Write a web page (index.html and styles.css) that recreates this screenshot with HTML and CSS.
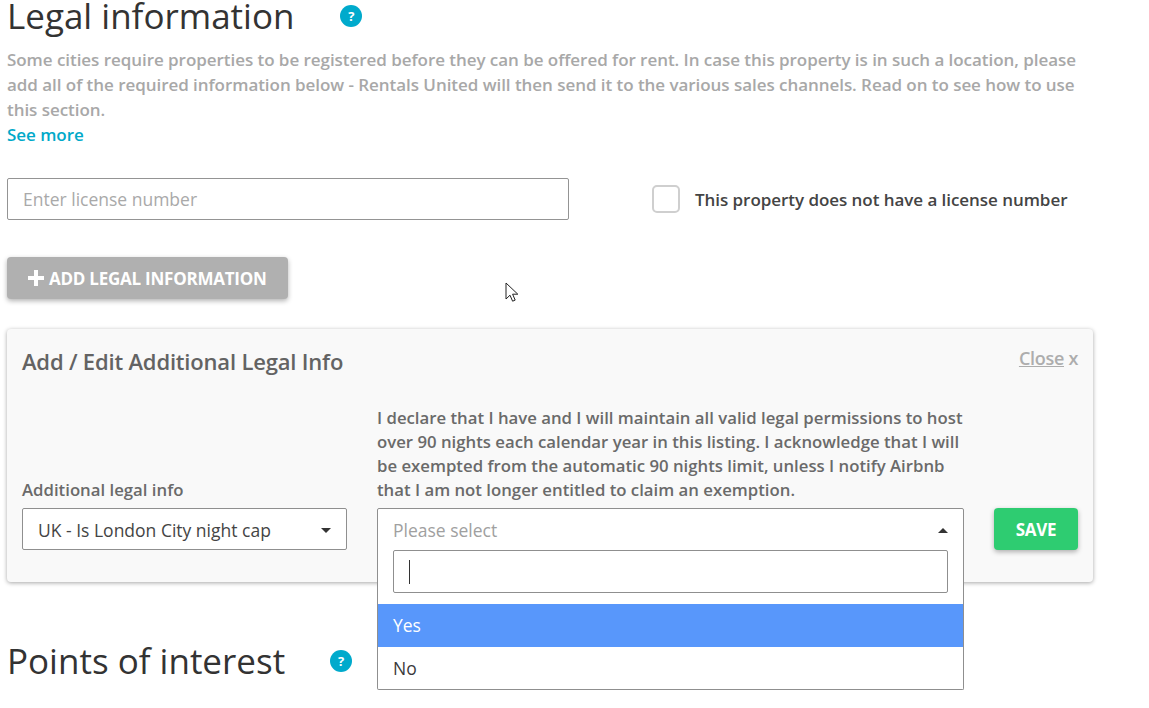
FILE: index.html
```html
<!DOCTYPE html>
<html lang="en">
<head>
<meta charset="utf-8">
<title>Legal information</title>
<link rel="stylesheet" href="styles.css">
</head>
<body>
<main class="page">
  <section class="legal">
    <header class="section-head">
      <h1 class="section-title">Legal information</h1>
      <span class="help help-legal">?</span>
    </header>
    <p class="intro">Some cities require properties to be registered before they can be offered for rent. In case this property is in such a location, please add all of the required information below - Rentals United will then send it to the various sales channels. Read on to see how to use this section.</p>
    <a class="see-more" href="#">See more</a>
    <div class="license-row">
      <input class="license-input" type="text" placeholder="Enter license number">
      <label class="license-check"><span class="checkbox"></span><span>This property does not have a license number</span></label>
    </div>
    <button class="add-btn" type="button"><svg class="plus" viewBox="0 0 16 16" width="16" height="16"><path d="M6 0h4v6h6v4h-6v6H6v-6H0V6h6z" fill="#fff"/></svg>ADD LEGAL INFORMATION</button>
  </section>

  <section class="panel">
    <div class="panel-head">
      <h2 class="panel-title">Add / Edit Additional Legal Info</h2>
      <span class="close"><a href="#">Close</a> x</span>
    </div>
    <div class="panel-form">
      <div class="field field-type">
        <label class="field-label">Additional legal info</label>
        <div class="select"><span>UK - Is London City night cap</span><i class="caret"></i></div>
      </div>
      <div class="field field-answer">
        <label class="field-label">I declare that I have and I will maintain all valid legal permissions to host over 90 nights each calendar year in this listing. I acknowledge that I will be exempted from the automatic 90 nights limit, unless I notify Airbnb that I am not longer entitled to claim an exemption.</label>
        <div class="select select-open">
          <span class="placeholder">Please select</span><i class="caret caret-up"></i>
          <div class="dropdown">
            <div class="search"><span class="text-cursor"></span></div>
            <ul class="options">
              <li class="option option-active">Yes</li>
              <li class="option">No</li>
            </ul>
          </div>
        </div>
      </div>
      <button class="save-btn" type="button">SAVE</button>
    </div>
  </section>

  <section class="poi">
    <header class="section-head">
      <h1 class="section-title">Points of interest</h1>
      <span class="help help-poi">?</span>
    </header>
  </section>
</main>
<svg class="pointer" viewBox="0 0 13 21" width="13" height="21"><path d="M1 1v16l4-3.8 2.6 6 2.6-1.1-2.6-5.9h5.2z" fill="#fff" stroke="#222" stroke-width="1"/></svg>
</body>
</html>
```
FILE: styles.css
```css
* { box-sizing: border-box; }
html, body { margin: 0; height: 100%; }
body {
  position: relative;
  overflow: hidden;
  background: #fff;
  font-family: "Open Sans", "Liberation Sans", sans-serif;
  font-size: 16px;
  color: #3a3a3a;
}
.page { padding: 0 56px 0 7px; }
.section-head { display: flex; align-items: center; height: 32px; }
.section-title { margin: 0; font-size: 35px; line-height: 32px; font-weight: 400; color: #333; white-space: nowrap; }
.help {
  display: flex; align-items: center; justify-content: center;
  width: 22px; height: 22px; border-radius: 50%;
  background: #00aacc; color: #fff; font-size: 13px; font-weight: 700;
}
.help-legal { margin-left: 46px; }
.help-poi { margin-left: 45px; }
.intro { margin: 15px 0 0; font-size: 17px; letter-spacing: -0.05px; line-height: 25px; font-weight: 600; color: #a8a8a8; width: 1080px; }
.see-more { display: block; font-size: 17px; letter-spacing: -0.05px; line-height: 25px; font-weight: 600; color: #00a9c9; text-decoration: none; }
.license-row { display: flex; align-items: center; margin-top: 31px; }
.license-input {
  width: 562px; height: 42px; padding: 0 15px;
  border: 1px solid #949494; border-radius: 2px;
  font: 400 17.5px "Open Sans", sans-serif; color: #333; outline: none;
}
.license-input::placeholder { color: #a9a9a9; opacity: 1; }
.license-check { display: flex; align-items: center; margin-left: 83px; font-weight: 600; font-size: 17px; letter-spacing: -0.05px; color: #444; }
.checkbox { width: 28px; height: 28px; margin-right: 15px; border: 2px solid #cfcfcf; border-radius: 5px; background: #fff; }
.add-btn {
  display: flex; align-items: center;
  height: 42px; width: 281px; margin-top: 37px; padding: 0 0 0 21px;
  border: 0; border-radius: 4px; background: #b0b0b0; color: #fff;
  font: 700 17px "Open Sans", sans-serif; letter-spacing: -0.24px;
  box-shadow: 0 2px 5px rgba(0,0,0,.3);
}
.plus { margin-right: 5px; }
.panel {
  width: 1086px; height: 253px; margin-top: 30px; padding: 0 15px;
  background: #f9f9f9; border-radius: 4px;
  box-shadow: 0 1px 4px rgba(0,0,0,.35);
}
.panel-head { display: flex; justify-content: space-between; padding-top: 16px; }
.panel-title { margin: 0; font-size: 22px; line-height: 32px; font-weight: 600; color: #636363; letter-spacing: -0.18px; }
.close { font-size: 18px; line-height: 26px; font-weight: 600; color: #adadad; letter-spacing: -0.3px; }
.close a { color: #adadad; }
.panel-form { display: flex; align-items: flex-end; gap: 30px; margin-top: 29px; }
.field { display: flex; flex-direction: column; }
.field-type { width: 325px; }
.field-answer { width: 587px; }
.field-label { font-size: 16.75px; line-height: 24px; font-weight: 600; color: #6a6a6a; margin-bottom: 6px; }
.select {
  position: relative; display: flex; align-items: center; justify-content: space-between;
  height: 42px; padding: 2px 15px 0;
  background: #fff; border: 1px solid #8f8f8f; border-radius: 2px;
  font-size: 17.5px; color: #444;
}
.placeholder { color: #a0a0a0; }
.caret { width: 0; height: 0; border: 5px solid transparent; border-top: 5px solid #333; border-bottom: 0; }
.caret-up { border-top: 0; border-bottom: 5px solid #333; }
.select-open { border-radius: 2px 2px 0 0; }
.dropdown {
  position: absolute; left: -1px; right: -1px; top: 40px; z-index: 2;
  height: 141px; padding-top: 1px;
  background: #fff; border: 1px solid #8f8f8f; border-top: 0; border-radius: 0 0 2px 2px;
}
.search {
  display: flex; align-items: center;
  height: 43px; margin: 0 15px; padding-left: 15px;
  border: 1px solid #8f8f8f; border-radius: 2px; background: #fff;
}
.text-cursor { width: 1px; height: 24px; background: #333; }
.options { list-style: none; margin: 11px 0 0; padding: 0; }
.option { height: 43px; padding: 0 15px; line-height: 43px; font-size: 17.5px; color: #3a3a3a; }
.option-active { background: #5897fb; color: #fff; }
.save-btn {
  width: 84px; height: 42px; padding: 0;
  border: 0; border-radius: 4px; background: #2ecc71; color: #fff;
  font: 700 17px "Open Sans", sans-serif; letter-spacing: -0.3px;
  box-shadow: 0 2px 5px rgba(0,0,0,.3);
}
.poi { margin-top: 63px; }
.pointer { position: absolute; left: 505px; top: 282px; }
```
